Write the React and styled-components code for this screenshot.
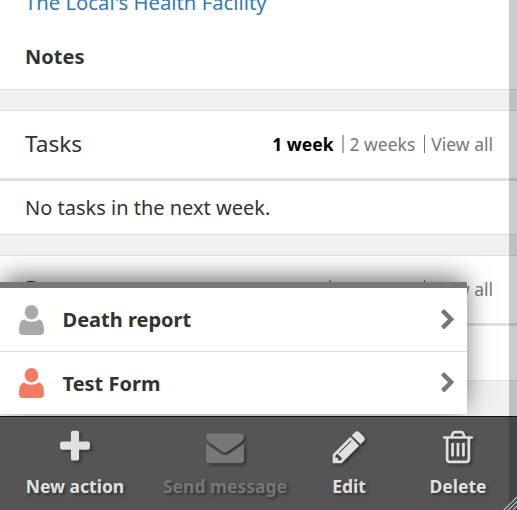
import React from "react";
import styled, { createGlobalStyle } from "styled-components";

const Global = createGlobalStyle`
  * { box-sizing: border-box; }
  body { margin: 0; background: #f1f1f1; font-family: "Noto Sans", sans-serif; color: #333; }
`;

const Screen = styled.div`
  position: relative;
  width: 517px;
  height: 510px;
  overflow: hidden;
  background: #f1f1f1;
`;

const Card = styled.section`
  background: #fff;
  border-top: ${(p) => (p.$first ? "0" : "1px solid #e0e0e0")};
  border-bottom: 1px solid #e0e0e0;
  margin-bottom: 20px;
`;

const Details = styled.div`
  height: 89px;
  padding-left: 25px;
  overflow: hidden;
`;

const Facility = styled.a`
  display: block;
  height: 28px;
  margin-top: -12px;
  font-size: 20.25px;
  line-height: 28px;
  color: #337ab7;
`;

const Label = styled.div`
  margin-top: 27px;
  font-size: 20px;
  line-height: 28px;
  font-weight: 700;
`;

const CardHeader = styled.header`
  display: flex;
  align-items: center;
  justify-content: space-between;
  height: 70px;
  padding: 0 24px 2px 25px;
  border-bottom: 3px solid #e0e0e0;
`;

const Title = styled.h3`
  margin: 0;
  font-size: 22.6px;
  line-height: 30px;
  font-weight: 400;
`;

const Filters = styled.nav`
  display: flex;
  align-items: center;
  padding-top: 1px;
  font-size: 17.5px;
  line-height: 18px;
  color: #777;
`;

const Filter = styled.a`
  color: ${(p) => (p.$active ? "#000" : "#777")};
  font-weight: ${(p) => (p.$active ? 700 : 400)};
  & + & {
    margin-left: 8px;
    padding-left: 6px;
    border-left: 2px solid #aaa;
  }
  &:last-child {
    margin-left: 9px;
    border-left: 1px solid #777;
  }
`;

const Empty = styled.p`
  height: ${(p) => (p.children ? 53 : 54)}px;
  margin: 0;
  padding-left: 25px;
  font-size: 20px;
  line-height: 53px;
`;

const ActionMenu = styled.div`
  position: absolute;
  left: 0;
  top: 282px;
  width: 467px;
  height: 132px;
  background: #fff;
  border-top: 6px solid #777;
  box-shadow: 0 -5px 25px -3px rgba(0, 0, 0, 0.65);
`;

const MenuRow = styled.div`
  display: flex;
  align-items: center;
  height: 64px;
  padding: 0 8px 0 19px;
  border-bottom: 1px solid #e0e0e0;
  font-size: 20px;
  font-weight: 700;
  &:last-child { height: 62px; border-bottom: 0; }
`;

const RowName = styled.span`
  flex: 1;
  margin-left: 18.5px;
`;

const Chevron = styled.svg`
  width: 22px;
  height: 22px;
  fill: #777;
`;

const ActionBar = styled.footer`
  position: absolute;
  left: 0;
  bottom: 0;
  display: grid;
  grid-template-columns: 150px 150px 98px 120px;
  width: 517px;
  height: 94px;
  background: #555;
  border-top: 1px solid #111;
`;

const Action = styled.button`
  display: flex;
  flex-direction: column;
  align-items: center;
  padding: 11px 0 0;
  border: 0;
  background: none;
  color: ${(p) => (p.$disabled ? "#777" : "#e0e0e0")};
  font: 700 17.5px/25px "Noto Sans", sans-serif;
  text-shadow: 2px 2px 3px #333;
  white-space: nowrap;
  & svg {
    width: 38px;
    height: 38px;
    margin-bottom: 8px;
    fill: currentColor;
    overflow: visible;
    filter: drop-shadow(2px 2px 1.5px #333);
  }
`;

const ScrollBar = styled.div`
  position: absolute;
  top: 0;
  right: 0;
  width: 8px;
  height: 510px;
  background: rgba(0, 0, 0, 0.2);
`;

const Grip = styled.svg`
  position: absolute;
  right: 0;
  bottom: 0;
  width: 14px;
  height: 14px;
`;

const icons = {
  plus: "M1600 736v192q0 40-28 68t-68 28h-416v416q0 40-28 68t-68 28h-192q-40 0-68-28t-28-68v-416h-416q-40 0-68-28t-28-68v-192q0-40 28-68t68-28h416v-416q0-40 28-68t68-28h192q40 0 68 28t28 68v416h416q40 0 68 28t28 68z",
  envelope: "M1792 710v794q0 66-47 113t-113 47h-1472q-66 0-113-47t-47-113v-794q44 49 101 87 362 246 497 345 57 42 92.5 65.5t94.5 48 110 24.5h2q51 0 110-24.5t94.5-48 92.5-65.5q170-123 498-345 57-39 100-87zm0-294q0 79-49 151t-122 123q-376 261-468 325-10 7-42.5 31t-54 38.5-52 32.5-57.5 27-50 9h-2q-23 0-50-9t-57.5-27-52-32.5-54-38.5-42.5-31q-91-64-262-182.5t-205-142.5q-62-42-117-115.5t-55-136.5q0-78 41.5-130t118.5-52h1472q65 0 112.5 47t47.5 113z",
  pencil: "M491 1536l91-91-235-235-91 91v107h128v128h107zm523-928q0-22-22-22-10 0-17 7l-542 542q-7 7-7 17 0 22 22 22 10 0 17-7l542-542q7-7 7-17zm-54-192l416 416-832 832h-416v-416zm683 96q0 53-37 90l-166 166-416-416 166-165q36-38 90-38 53 0 91 38l235 234q37 39 37 91z",
  trash: "M704 736v576q0 14-9 23t-23 9h-64q-14 0-23-9t-9-23v-576q0-14 9-23t23-9h64q14 0 23 9t9 23zm256 0v576q0 14-9 23t-23 9h-64q-14 0-23-9t-9-23v-576q0-14 9-23t23-9h64q14 0 23 9t9 23zm256 0v576q0 14-9 23t-23 9h-64q-14 0-23-9t-9-23v-576q0-14 9-23t23-9h64q14 0 23 9t9 23zm128 724v-948h-896v948q0 22 7 40.5t14.5 27 10.5 8.5h832q3 0 10.5-8.5t14.5-27 7-40.5zm-672-1076h448l-48-117q-7-9-17-11h-317q-10 2-17 11zm928 32v64q0 14-9 23t-23 9h-96v948q0 83-47 143.5t-113 60.5h-832q-66 0-113-58.5t-47-141.5v-952h-96q-14 0-23-9t-9-23v-64q0-14 9-23t23-9h309l70-167q15-37 54-63t79-26h320q40 0 79 26t54 63l70 167h309q14 0 23 9t9 23z",
  chevron: "M1363 877l-742 742q-19 19-45 19t-45-19l-166-166q-19-19-19-45t19-45l531-531-531-531q-19-19-19-45t19-45l166-166q19-19 45-19t45 19l742 742q19 19 19 45t-19 45z",
};

const Person = ({ color }) => (
  <svg width="25" height="30" viewBox="0 0 25 30" fill={color}>
    <ellipse cx="12.5" cy="7.2" rx="6.8" ry="7.2" />
    <path d="M5.500 14.600C8.500 17.600 16.500 17.600 19.500 14.600C23.500 15 25 19.500 25 26Q25 30 21 30H4Q0 30 0 26C0 19.500 1.500 15 5.500 14.600Z" />
  </svg>
);

const DataCard = ({ title, filters, text }) => (
  <Card>
    <CardHeader>
      <Title>{title}</Title>
      <Filters>
        {filters.map((name, i) => (
          <Filter key={name} $active={i === 0}>{name}</Filter>
        ))}
      </Filters>
    </CardHeader>
    <Empty>{text}</Empty>
  </Card>
);

const forms = [
  { name: "Death report", color: "#a7a9ac" },
  { name: "Test Form", color: "#f47b63" },
];

const actions = [
  { name: "New action", icon: icons.plus },
  { name: "Send message", icon: icons.envelope, disabled: true },
  { name: "Edit", icon: icons.pencil },
  { name: "Delete", icon: icons.trash },
];

export default function App() {
  return (
    <Screen>
      <Global />
      <Card $first>
        <Details>
          <Facility>The Local's Health Facility</Facility>
          <Label>Notes</Label>
        </Details>
      </Card>
      <DataCard
        title="Tasks"
        filters={["1 week", "2 weeks", "View all"]}
        text="No tasks in the next week."
      />
      <DataCard title="Reports" filters={["3 months", "6 months", "View all"]} text="" />
      <ActionMenu>
        {forms.map((f) => (
          <MenuRow key={f.name}>
            <Person color={f.color} />
            <RowName>{f.name}</RowName>
            <Chevron viewBox="0 0 1792 1792"><path d={icons.chevron} /></Chevron>
          </MenuRow>
        ))}
      </ActionMenu>
      <ActionBar>
        {actions.map((a) => (
          <Action key={a.name} $disabled={a.disabled}>
            <svg viewBox="0 0 1792 1792"><path d={a.icon} /></svg>
            {a.name}
          </Action>
        ))}
      </ActionBar>
      <ScrollBar />
      <Grip viewBox="0 0 14 14">
        <path d="M1 14L14 1M5.500 14L14 5.500M10 14L14 10" stroke="#bbb" strokeWidth="1.2" />
      </Grip>
    </Screen>
  );
}
